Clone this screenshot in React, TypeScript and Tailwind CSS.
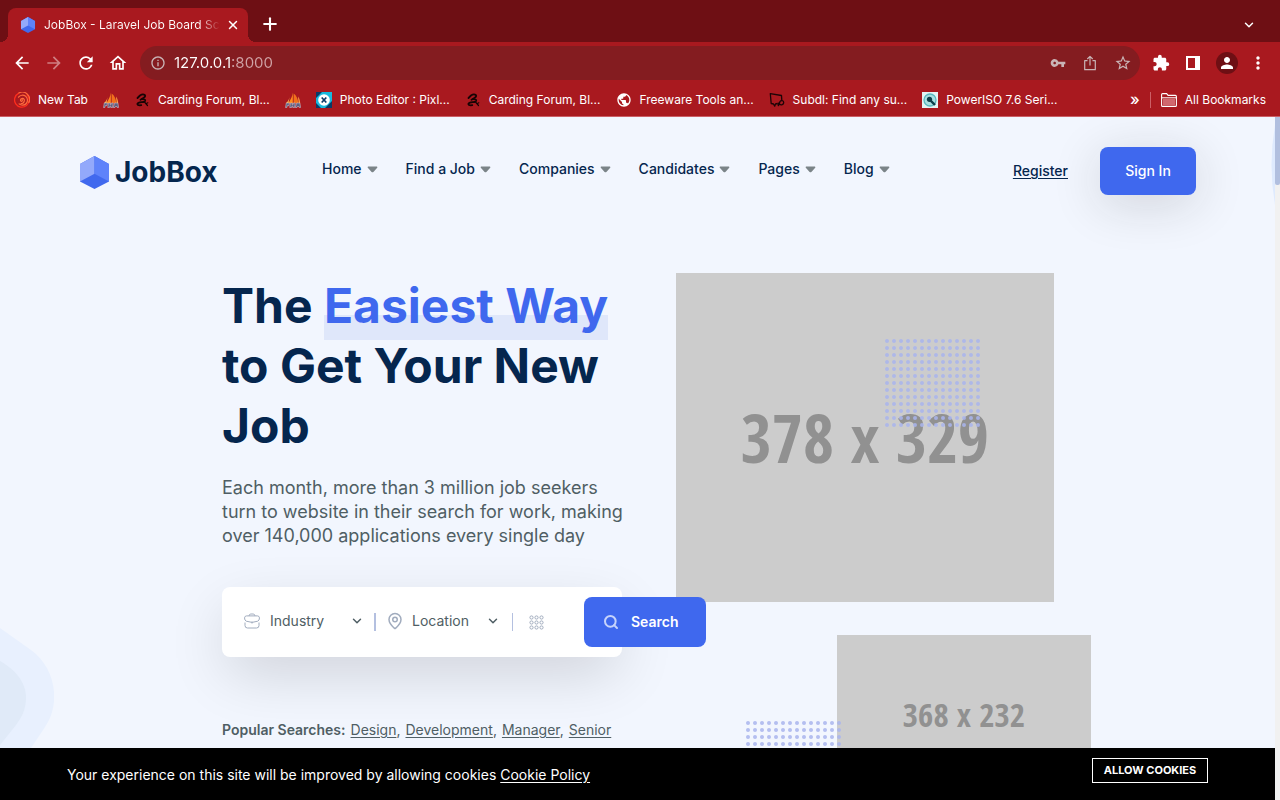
import type { ReactNode } from "react";
import { ChevronDown, X, Plus, Search, MapPin } from "lucide-react";
import {
  MdArrowBack,
  MdArrowForward,
  MdRefresh,
  MdOutlineHome,
  MdInfoOutline,
  MdVpnKey,
  MdStarBorder,
  MdExtension,
  MdPerson,
  MdMoreVert,
  MdPublic,
} from "react-icons/md";

function Cube({ className }: { className?: string }) {
  return (
    <svg viewBox="0 0 29 33" className={className} aria-hidden="true">
      <path d="M14.5 0L29 8v17.500L14.500 33 0 25.500V8z" fill="#4169ee" />
      <path d="M14.5 0v17.700L0 25.500V8z" fill="#93a9fb" />
      <path d="M14.5 0v17.700L29 25.500V8z" fill="#5f83fa" />
    </svg>
  );
}

function Swirl() {
  return (
    <svg viewBox="0 0 16 16" className="size-4" fill="none" stroke="#ff6a3c" strokeLinecap="round" aria-hidden="true">
      <path d="M4.500 1.400A7.300 7.300 0 1 0 13 2.700" stroke="#ff2d1e" strokeWidth="1.300" />
      <path d="M5 .9a7.300 7.300 0 0 1 9.900 9.600" strokeWidth="1.200" />
      <path d="M4.500 5.200a5 5 0 1 1 .6 6.700" strokeWidth="1.200" />
      <path d="M7 11.500c3.600.2 4.600-5 1.500-5.200-2.300 0-2.500 2.800-1.200 3 1 0 1.200-1 .9-1.500" strokeWidth="1.200" />
    </svg>
  );
}

function Sails() {
  return (
    <svg viewBox="0 0 16 16" className="size-4" aria-hidden="true">
      <path d="M7.800.5C7.500 4 5.500 8 3.500 11h4.300z" fill="#ff8a1f" />
      <path d="M8.600 1.500c3 2 4.500 6 4.600 9.500H8.600z" fill="#f0701c" />
      <path d="M4.800 4C4.500 6.500 3 9.500 1 11h2.500z" fill="#f9b04a" />
      <path d="M13 4.500c1.500 2 2 4.500 2.200 6.500h-1.500z" fill="#f9a040" />
      <path d="M.5 15.500L1.300 11h3.200l-.6 2.700H2.200l-.3 1.800zM4.700 15.500l.8-4.500h2l-.3 1.700h.8l.3-1.700h2l-.8 4.500H7.700l.2-1.300h-1l-.3 1.300zM10.200 15.500l1.500-4.500h3.200l.7 4.500h-1.500v-1h-1.700l-.4 1z" fill="#5d6180" stroke="#d5d7e4" strokeWidth=".5" />
    </svg>
  );
}

function Dragon() {
  return (
    <svg viewBox="0 0 16 16" className="size-4" fill="none" stroke="#160404" strokeLinecap="round" strokeLinejoin="round" aria-hidden="true">
      <path d="M3.500 6L6 3.500Q9 1.500 11 3.200q.8 1.800-2.500 3.300L6.500 7.700" strokeWidth="1.800" />
      <path d="M8 7.200q3.500-.2 3.200 1.500-.4 1.300-3.500 1.500Q3.800 10.400 3.300 12q.3 1.700 4 1.200" strokeWidth="1.700" />
      <path d="M10.500 10l3 3.500M12 11.700l1.800-.9" strokeWidth="1.200" />
    </svg>
  );
}

function PixlrMark() {
  return (
    <svg viewBox="0 0 16 16" className="size-4" aria-hidden="true">
      <path d="M0 0h16v16H0z" fill="#18b8dc" />
      <path d="M0 0h6L0 6zM16 9v7H9zM0 11l5 5H0z" fill="#0b3a66" />
      <circle cx="8" cy="8" r="5.800" fill="#fff" />
      <path d="M5.700 5.500l4.600 5M10.300 5.500l-4.600 5" stroke="#0b3a66" strokeWidth="1.700" />
    </svg>
  );
}

function SubdlMark() {
  return (
    <svg viewBox="0 0 16 16" className="size-4" fill="none" stroke="#1d0406" strokeWidth="1.300" strokeLinejoin="round" aria-hidden="true">
      <path d="M8.500 11.500L6.500 12l-.8 2.200L4.500 12l-2.300-.5L1.300 1.700l11.200 1.800.3 5" />
      <path d="M11 9.500c1-1.500 3.500-1.200 3.700.8.200 2.400-2.700 3.400-4.200 1.700l-1.200 1.500-.3-2.200 1.500-.3z" />
    </svg>
  );
}

function PowerIsoMark() {
  return (
    <svg viewBox="0 0 16 16" className="size-4" aria-hidden="true">
      <path d="M0 0h16v16H0z" fill="#e4f4f4" />
      <circle cx="8" cy="8" r="6" fill="#a9dfe1" stroke="#59b9bf" strokeWidth="1.300" />
      <path d="M7.500 7.500l5.500 5.500" stroke="#0c3f4a" strokeWidth="2.400" />
      <circle cx="7.500" cy="7.300" r="2.600" fill="#0c3f4a" />
    </svg>
  );
}

function Folder() {
  return (
    <svg viewBox="0 0 16 14" className="h-3.5 w-4" aria-hidden="true">
      <path d="M.6 12.400V1.600q0-1 1-1h4l1.500 1.800h7.300q1 0 1 1v9q0 1-1 1H1.600q-1 0-1-1z" fill="none" stroke="#fff" strokeWidth="1.100" />
      <path d="M2 6h12v6.500H2z" fill="#d0686e" />
      <path d="M.6 4.800h14.800" stroke="#fff" />
    </svg>
  );
}

function ShareIcon() {
  return (
    <svg viewBox="0 0 16 16" className="size-4" fill="none" stroke="currentColor" strokeWidth="1.200" aria-hidden="true">
      <path d="M5.500 5.700H2.700v9h10.600v-9h-2.800M8 10.500V1.500M5.300 4L8 1.300 10.700 4" strokeLinejoin="round" />
    </svg>
  );
}

function SidePanel() {
  return (
    <svg viewBox="0 0 14 14" className="size-3.5" aria-hidden="true">
      <path d="M0 0h14v14H0zM2 2v10h7V2z" fill="#fff" fillRule="evenodd" />
    </svg>
  );
}

function BriefcaseIcon() {
  return (
    <svg viewBox="0 0 16 16" className="size-4 shrink-0" fill="none" stroke="#a1acbe" strokeLinejoin="round" aria-hidden="true">
      <path d="M5 2.900q.3-1.900 1.800-1.900h2.400q1.500 0 1.800 1.900M2.500 2.900h11q1.700 0 2 2-.1 2.600-1.800 3.300Q8 10.600 2.300 8.200.6 7.500.5 4.900.8 2.900 2.500 2.900zM8 8.500v2M1 9.500v3q0 2.500 2.500 2.500h9q2.500 0 2.500-2.500v-3" />
    </svg>
  );
}

function GridIcon() {
  const cells = [2.5, 7.5, 12.5];
  return (
    <svg viewBox="0 0 15 15" className="size-[15px] shrink-0" fill="none" stroke="#a1acbe" aria-hidden="true">
      {cells.map((y) => cells.map((x) => <circle key={`${x}-${y}`} cx={x} cy={y} r="1.600" />))}
    </svg>
  );
}

function Dots({ id, className }: { id: string; className: string }) {
  return (
    <svg className={className} aria-hidden="true">
      <pattern id={id} width="7" height="7" patternUnits="userSpaceOnUse">
        <circle cx="2" cy="2" r="2" fill="#a9b5ee" fillOpacity=".85" />
      </pattern>
      <rect width="100%" height="100%" fill={`url(#${id})`} />
    </svg>
  );
}

function Bookmark({ icon, label, children }: { icon: ReactNode; label: string; children?: ReactNode }) {
  return (
    <a href="#" aria-label={label} className="flex shrink-0 items-center gap-2">
      {icon}
      {children}
    </a>
  );
}

const menu = ["Home", "Find a Job", "Companies", "Candidates", "Pages", "Blog"];
const searches = ["Design", "Development", "Manager", "Senior"];

function BrowserChrome() {
  return (
    <header className="shrink-0 border-b border-[#cc5f66] bg-[#a9191f] text-xs text-white">
      <div className="flex h-[42px] items-end bg-[#6e0f14] pl-2">
        <div className="relative flex h-[34px] w-60 items-center rounded-t-lg bg-[#a9191f] pr-2 pl-3">
          <span className="absolute bottom-0 -left-2 size-2 bg-[radial-gradient(circle_at_0_0,#6e0f14_8px,#a9191f_8px)]" />
          <span className="absolute -right-2 bottom-0 size-2 bg-[radial-gradient(circle_at_100%_0,#6e0f14_8px,#a9191f_8px)]" />
          <Cube className="size-4 shrink-0" />
          <span className="ml-2 flex-1 bg-linear-to-r from-white from-88% to-transparent to-100% bg-clip-text whitespace-nowrap text-transparent">
            JobBox - Laravel Job Board Sc
          </span>
          <button aria-label="Close tab" className="ml-1.5 shrink-0">
            <X className="size-3.5" strokeWidth={2.5} />
          </button>
        </div>
        <button aria-label="New tab" className="mb-2 ml-3">
          <Plus className="size-5" strokeWidth={2.5} />
        </button>
        <button aria-label="Search tabs" className="mr-6 mb-2.5 ml-auto">
          <ChevronDown className="size-3.5" strokeWidth={2.5} />
        </button>
      </div>
      <div className="flex h-[42px] items-center px-3">
        <div className="flex gap-3 text-xl">
          <button aria-label="Back"><MdArrowBack /></button>
          <button aria-label="Forward" className="text-[#cf7f83]"><MdArrowForward /></button>
          <button aria-label="Reload"><MdRefresh /></button>
          <button aria-label="Home"><MdOutlineHome /></button>
        </div>
        <div className="ml-3 flex h-[34px] flex-1 items-center rounded-full bg-[#841c20] pr-2 pl-2.5 text-base text-[#c9b4b6]">
          <MdInfoOutline />
          <input
            aria-label="Address"
            defaultValue="127.0.0.1:8000"
            className="ml-2 min-w-0 flex-1 bg-linear-to-r from-white from-[58px] to-[#d0a3a6] to-[58px] bg-clip-text text-[15px] text-transparent outline-none"
          />
          <div className="flex items-center gap-4">
            <button aria-label="Passwords"><MdVpnKey /></button>
            <button aria-label="Share"><ShareIcon /></button>
            <button aria-label="Bookmark this page"><MdStarBorder className="size-[18px]" /></button>
          </div>
        </div>
        <div className="ml-3 flex items-center gap-2.5">
          <button aria-label="Extensions"><MdExtension className="size-[18px]" /></button>
          <button aria-label="Side panel" className="px-1.5"><SidePanel /></button>
          <button aria-label="Profile" className="grid size-[22px] place-items-center rounded-full bg-[#6e0f14]">
            <MdPerson className="size-[18px]" />
          </button>
          <button aria-label="Menu"><MdMoreVert className="size-5" /></button>
        </div>
      </div>
      <nav aria-label="Bookmarks" className="flex h-8 items-center px-3.5">
        <div className="flex min-w-0 flex-1 items-center gap-[15px] overflow-hidden">
          <Bookmark icon={<Swirl />} label="New Tab">New Tab</Bookmark>
          <Bookmark icon={<Sails />} label="Sails" />
          <Bookmark icon={<Dragon />} label="Carding Forum">Carding Forum, Bl...</Bookmark>
          <Bookmark icon={<Sails />} label="Sails" />
          <Bookmark icon={<PixlrMark />} label="Photo Editor">Photo Editor : Pixl...</Bookmark>
          <Bookmark icon={<Dragon />} label="Carding Forum">Carding Forum, Bl...</Bookmark>
          <Bookmark icon={<MdPublic className="size-4" />} label="Freeware Tools">Freeware Tools an...</Bookmark>
          <Bookmark icon={<SubdlMark />} label="Subdl">Subdl: Find any su...</Bookmark>
          <Bookmark icon={<PowerIsoMark />} label="PowerISO">PowerISO 7.6 Seri...</Bookmark>
        </div>
        <button aria-label="More bookmarks" className="pb-0.5 text-base font-medium">»</button>
        <span className="mx-2.5 h-4 w-px bg-[#cc5f66]" />
        <a href="#" className="flex items-center gap-2"><Folder />All Bookmarks</a>
      </nav>
    </header>
  );
}

function SiteHeader() {
  return (
    <div className="relative flex items-center pt-[30px] pr-[79px] pl-20 text-sm font-medium text-[#05264e]">
      <a href="#" className="flex w-[242px] items-center gap-1.5 pt-0.5 text-[28px] leading-8 font-bold">
        <Cube className="h-[33px] w-[29px]" />
        JobBox
      </a>
      <nav aria-label="Main" className="flex gap-7 pb-1">
        {menu.map((item) => (
          <button key={item} className="flex items-center gap-[5px]">
            {item}
            <svg viewBox="0 0 11 7" className="h-[7px] w-[11px]" aria-hidden="true">
              <path d="M1.200.5h8.600q1 .2.400 1.200L6.400 5.900q-.9.800-1.800 0L.8 1.700Q.2.700 1.200.5z" fill="#7b8488" />
            </svg>
          </button>
        ))}
      </nav>
      <a href="#" className="ml-auto underline underline-offset-2">Register</a>
      <button className="ml-8 h-12 w-24 rounded-lg bg-[#3f68ee] text-white shadow-[0_9px_50px_rgba(29,29,29,0.16)]">Sign In</button>
    </div>
  );
}

function SearchForm() {
  return (
    <form className="mt-[39px] flex h-[70px] w-[400px] items-center rounded-lg bg-white pl-[22px] text-sm text-[#4f5e64] shadow-[0_20px_60px_-6px_rgba(0,0,0,0.16)]">
      <div className="flex shrink-0 items-center pb-0.5">
        <BriefcaseIcon />
        <select aria-label="Industry" className="ml-2.5 w-20 appearance-none bg-transparent outline-none">
          <option>Industry</option>
        </select>
        <ChevronDown className="size-3.5" strokeWidth={2.5} />
      </div>
      <span className="mx-2.5 h-[18px] w-0.5 shrink-0 bg-[#b4c0e0]" />
      <div className="flex shrink-0 items-center pb-0.5">
        <MapPin className="size-[18px] text-[#a1acbe]" strokeWidth={2} />
        <select aria-label="Location" className="ml-2 w-[74px] appearance-none bg-transparent outline-none">
          <option>Location</option>
        </select>
        <ChevronDown className="size-3.5" strokeWidth={2.5} />
      </div>
      <span className="mx-3 h-[18px] w-px shrink-0 bg-[#b4c0e0]" />
      <label className="ml-1 flex shrink-0 items-center">
        <GridIcon />
        <input aria-label="Your keyword" className="w-10 bg-transparent outline-none" />
      </label>
      <button type="button" className="flex h-[50px] w-[122px] shrink-0 items-center rounded-lg bg-[#3f68ee] pl-[19px] font-semibold text-white">
        <Search className="mr-3 size-4 text-[#c6d3fb]" strokeWidth={3} />
        Search
      </button>
    </form>
  );
}

function Hero() {
  return (
    <section className="relative flex gap-11 pt-[78px] pl-[222px]">
      <div className="relative z-10 w-[410px] shrink-0">
        <h1 className="w-[400px] pt-[3px] text-5xl leading-[60px] font-bold text-[#05264e]">
          The{" "}
          <span className="relative isolate inline-block text-[#3f68ee]">
            Easiest Way
            <span className="absolute inset-x-0 -bottom-1 -z-10 h-[25px] bg-[#dfe7fa]" />
          </span>{" "}
          to Get Your New Job
        </h1>
        <p className="mt-5 text-lg leading-6 text-[#4f5e64]">
          Each month, more than 3 million job seekers turn to website in their search for work, making over 140,000 applications every single day
        </p>
        <SearchForm />
        <p className="mt-[61px] flex gap-[5px] text-sm leading-6 whitespace-nowrap text-[#4f5e64]">
          <strong className="font-semibold">Popular Searches:</strong>
          {searches.map((name, i) => (
            <span key={name}>
              <a href="#" className="underline underline-offset-2">{name}</a>
              {i < searches.length - 1 && ","}
            </span>
          ))}
        </p>
      </div>
      <div className="flex w-[415px] shrink-0 flex-col font-['Noto_Sans_ExtraCondensed','Open_Sans_Condensed','Roboto_Condensed','Roboto',sans-serif] font-bold text-[#919191]">
        <div className="relative grid h-[329px] w-[378px] place-items-center bg-[#cccccc] text-[67px]">
          378 x 329
          <Dots id="dots-top" className="absolute top-[66px] left-[209px] h-[90px] w-[97px]" />
        </div>
        <div className="relative mt-[33px] grid h-40 w-[254px] place-items-center self-end bg-[#cccccc] text-[33px]">
          368 x 232
          <Dots id="dots-bottom" className="absolute top-[86px] -left-[91px] h-[90px] w-[97px]" />
        </div>
      </div>
    </section>
  );
}

export default function App() {
  return (
    <div className="flex h-screen flex-col overflow-hidden bg-[#f2f6fd] font-['Inter','Liberation_Sans',sans-serif]">
      <BrowserChrome />
      <div className="flex min-h-0 flex-1">
        <div className="flex min-w-0 flex-1 flex-col">
          <main className="relative min-h-0 flex-1 overflow-hidden bg-[#f2f6fe]">
            <svg viewBox="0 0 54 122" className="absolute bottom-0 left-0 h-[122px] w-[54px]" aria-hidden="true">
              <path d="M0 2l31 22c25 18 30 54 14 77L31 122H0z" fill="#e8f0fe" />
              <path d="M0 35c14 8 26 20 26 37 0 12-5 20-10 27L0 119z" fill="#e0eaf8" />
            </svg>
            <svg viewBox="0 0 4 80" className="absolute top-2 right-0 h-20 w-1" aria-hidden="true">
              <path d="M4 0Q-3 40 4 80z" fill="#deeafe" />
            </svg>
            <SiteHeader />
            <Hero />
          </main>
          <footer className="flex h-[52px] shrink-0 items-start justify-between bg-black px-[67px] text-white">
            <p className="pt-4 text-sm leading-[22px]">
              Your experience on this site will be improved by allowing cookies{" "}
              <a href="#" className="underline underline-offset-2">Cookie Policy</a>
            </p>
            <button className="mt-2.5 h-[25px] w-[116px] border border-white text-[11px] font-bold">ALLOW COOKIES</button>
          </footer>
        </div>
        <div className="w-[5px] shrink-0 bg-[#f1f1f1]">
          <div className="h-[68px] rounded-b-xs bg-[#b1bfdf]" />
        </div>
      </div>
    </div>
  );
}
